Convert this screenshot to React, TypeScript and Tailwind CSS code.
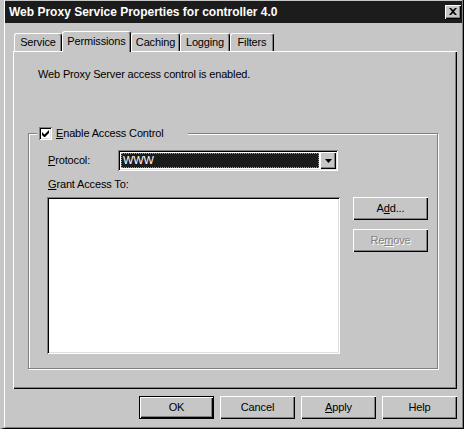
import React from "react";

const raised =
  "shadow-[inset_1px_1px_0_#ffffff,inset_-1px_-1px_0_#000000,inset_-2px_-2px_0_#808080]";
const sunken =
  "shadow-[inset_1px_1px_0_#808080,inset_-1px_-1px_0_#ffffff,inset_2px_2px_0_#000000,inset_-2px_-2px_0_#dfdfdf]";

function Btn({
  children,
  def = false,
  disabled = false,
}: {
  children: React.ReactNode;
  def?: boolean;
  disabled?: boolean;
}) {
  if (def) {
    return (
      <div className="w-[75px] h-[23px] border border-black">
        <div className={`w-full h-full flex items-center justify-center ${raised}`}>{children}</div>
      </div>
    );
  }
  return (
    <div
      className={`w-[75px] h-[23px] flex items-center justify-center ${raised} ${
        disabled ? "text-[#808080] [text-shadow:1px_1px_0_#ffffff]" : ""
      }`}
    >
      {children}
    </div>
  );
}

function Tab({ label, w, selected = false }: { label: string; w: string; selected?: boolean }) {
  if (selected) {
    return (
      <div
        className={`${w} h-[21px] mb-[-1px] relative z-10 bg-[#c6c6c6] border-t border-l border-white border-r border-r-black rounded-t-[3px] shadow-[inset_-1px_0_0_#808080] flex items-start justify-center pt-[3px]`}
      >
        {label}
      </div>
    );
  }
  return (
    <div
      className={`${w} h-[18px] border-t border-l border-white border-r border-r-black rounded-t-[3px] shadow-[inset_-1px_0_0_#808080] flex items-start justify-center pt-[2px]`}
    >
      {label}
    </div>
  );
}

export default function App() {
  return (
    <div className="w-[471px] h-[435px] bg-white font-['Liberation_Sans',Arial,sans-serif] text-[11px] tracking-[-0.15px] leading-[13px] text-black">
      <div className="w-[464px] h-[429px] bg-[#c6c6c6] border-l-[4px] border-l-[#c6c6c6] border-r border-r-black border-b border-b-black">
        <div className="h-full flex flex-col border-l border-l-white border-r border-r-[#808080] border-b border-b-[#808080]">
          {/* title bar */}
          <div className="mt-[1px] h-[22px] bg-[#1c1c1c] flex items-center pl-[4px] pr-[1px]">
            <span className="text-white font-bold text-[12px] tracking-normal">
              Web Proxy Service Properties for controller 4.0
            </span>
            <div className={`ml-auto w-[16px] h-[14px] bg-[#c6c6c6] flex items-center justify-center ${raised}`}>
              <svg width="8" height="7" viewBox="0 0 8 7" className="mb-[1px]">
                <path d="M0 0h2l2 2 2-2h2L5 3.5 8 7H6L4 5 2 7H0l3-3.5z" fill="#000" />
              </svg>
            </div>
          </div>

          {/* tabs */}
          <div className="mt-[8px] h-[20px] flex items-end pl-[9px]">
            <Tab label="Service" w="w-[48px]" />
            <Tab label="Permissions" w="w-[69px]" selected />
            <Tab label="Caching" w="w-[49px]" />
            <Tab label="Logging" w="w-[50px]" />
            <Tab label="Filters" w="w-[44px]" />
          </div>

          {/* panel */}
          <div className={`ml-[8px] w-[444px] h-[338px] flex flex-col ${raised}`}>
            <div className="pl-[25px] pt-[17px]">Web Proxy Server access control is enabled.</div>

            <div className="relative ml-[15px] mt-[52px] w-[410px] h-[236px] border border-[#808080] shadow-[1px_1px_0_#ffffff,inset_1px_1px_0_#ffffff]">
              {/* legend */}
              <div className="absolute left-[8px] top-[-7px] pl-[2px] pr-[24px] bg-[#c6c6c6] flex items-center h-[13px]">
                <div className={`w-[13px] h-[13px] bg-white flex items-center justify-center ${sunken}`}>
                  <svg width="7" height="7" viewBox="0 0 7 7">
                    <path d="M0 2v3l2 2h1l4-4V0L2.5 4.5z" fill="#000" />
                  </svg>
                </div>
                <span className="ml-[4px]">
                  <span className="underline underline-offset-[1px]">E</span>nable Access Control
                </span>
              </div>

              <div className="pl-[18px] pt-[16px] flex flex-col">
                <div className="flex items-center h-[21px]">
                  <div className="ml-[1px] w-[70px]">
                    <span className="underline underline-offset-[1px]">P</span>rotocol:
                  </div>
                  <div className={`w-[220px] h-[21px] p-[2px] flex bg-white ${sunken}`}>
                    <div className="flex-1 m-[1px] bg-[#1c1c1c] border border-dotted border-[#9a9a9a] text-white flex items-center pl-[1px]">
                      WWW
                    </div>
                    <div className={`w-[16px] h-[17px] bg-[#c6c6c6] flex items-center justify-center ${raised}`}>
                      <svg width="7" height="4" viewBox="0 0 7 4">
                        <path d="M0 0h7L3.5 4z" fill="#000" />
                      </svg>
                    </div>
                  </div>
                </div>

                <div className="ml-[1px] mt-[7px]">
                  <span className="underline underline-offset-[1px]">G</span>rant Access To:
                </div>

                <div className="mt-[6px] flex">
                  <div className={`w-[293px] h-[157px] bg-white ${sunken}`} />
                  <div className="ml-[13px] flex flex-col gap-[9px]">
                    <Btn>
                      <span>
                        A<span className="underline underline-offset-[1px]">d</span>d...
                      </span>
                    </Btn>
                    <Btn disabled>
                      <span>
                        Re<span className="underline underline-offset-[1px]">m</span>ove
                      </span>
                    </Btn>
                  </div>
                </div>
              </div>
            </div>
          </div>

          {/* bottom buttons */}
          <div className="mt-[7px] ml-[8px] w-[444px] flex justify-end gap-[6px]">
            <Btn def>OK</Btn>
            <Btn>Cancel</Btn>
            <Btn>
              <span>
                <span className="underline underline-offset-[1px]">A</span>pply
              </span>
            </Btn>
            <Btn>Help</Btn>
          </div>
        </div>
      </div>
    </div>
  );
}
